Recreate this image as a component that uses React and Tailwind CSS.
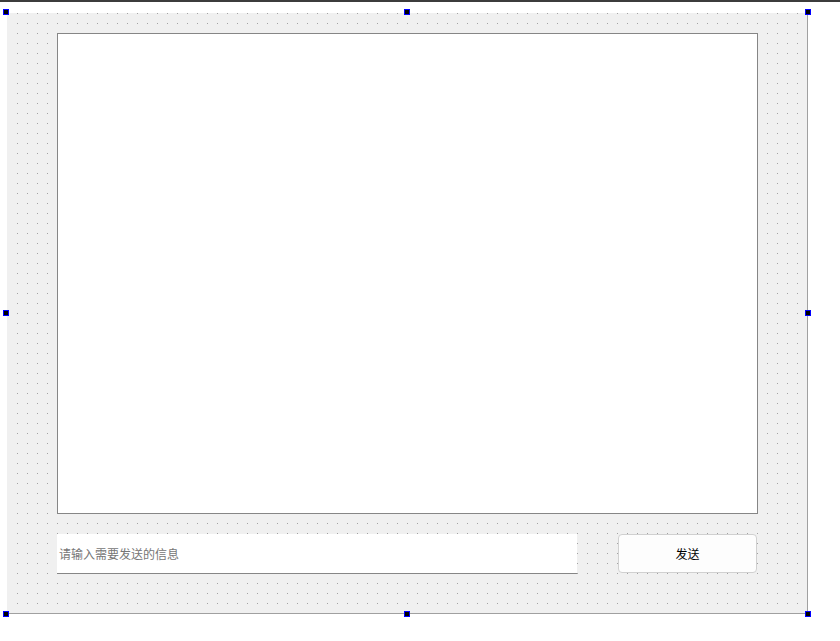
import React from "react";

function Handle({ className }) {
  return (
    <div
      className={
        "absolute w-[6px] h-[6px] border border-[#0000ff] bg-black " + className
      }
    />
  );
}

export default function App() {
  return (
    <div
      className="w-[840px] h-[641px] bg-white flex flex-col overflow-hidden"
      style={{ fontFamily: '"Noto Sans CJK SC", "Noto Sans", sans-serif' }}
    >
      <div className="h-[2px] w-full bg-[#3c3c3c]" />
      <div className="relative ml-[7px] mt-[11px] w-[801px] h-[601px] border-l border-l-[#f0f0f0] border-r border-r-[#a0a0a0] border-b border-b-[#a0a0a0] bg-[#f0f0f0] bg-clip-padding [background-image:conic-gradient(from_270deg_at_1px_1px,#a2a2a2_90deg,transparent_0)] [background-size:10px_10px] [background-position:9px_0px]">
        <div className="flex flex-col pl-[49px] pt-[20px]">
          <div className="w-[701px] h-[481px] bg-white border border-[#868686]" />
          <div className="flex flex-row items-start mt-[20px]">
            <div className="w-[520px] h-[40px] bg-white border-b border-b-[#868686] flex items-center pl-[2px] text-[12px] text-[#767676]">
              请输入需要发送的信息
            </div>
            <div className="ml-[41px] w-[139px] h-[39px] bg-[#fdfdfd] border border-[#d0d0d0] rounded-[4px] flex items-center justify-center text-[12px] text-black">
              发送
            </div>
          </div>
        </div>
        <Handle className="left-[-5px] top-[-4px]" />
        <Handle className="left-[396px] top-[-4px]" />
        <Handle className="left-[797px] top-[-4px]" />
        <Handle className="left-[-5px] top-[297px]" />
        <Handle className="left-[797px] top-[297px]" />
        <Handle className="left-[-5px] top-[598px]" />
        <Handle className="left-[396px] top-[598px]" />
        <Handle className="left-[797px] top-[598px]" />
      </div>
    </div>
  );
}
